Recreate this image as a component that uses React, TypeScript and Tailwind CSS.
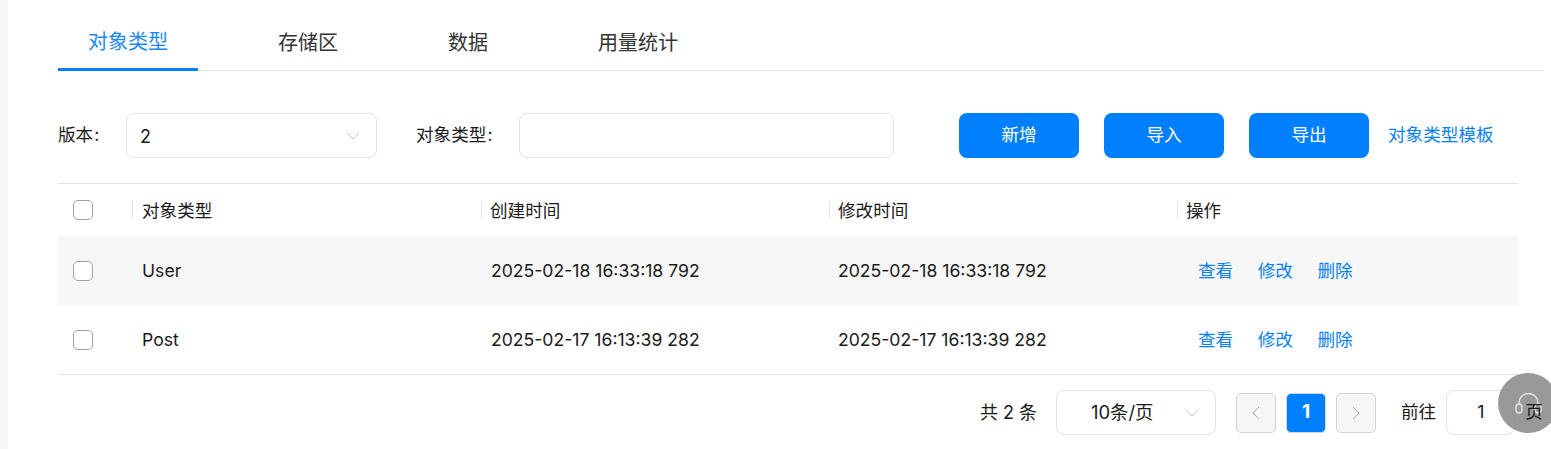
const FONT = "font-['Inter','Noto_Sans_CJK_SC',sans-serif]";

function Chevron({ dir = "down", className = "" }: { dir?: "down" | "left" | "right"; className?: string }) {
  const d = dir === "down" ? "M1 1l6 6 6-6" : dir === "left" ? "M7 1L1 7l6 6" : "M1 1l6 6-6 6";
  const w = dir === "down" ? 14 : 8;
  const h = dir === "down" ? 8 : 14;
  return (
    <svg width={w} height={h} viewBox={`0 0 ${w} ${h}`} fill="none" stroke="currentColor" strokeWidth="1" className={className}>
      <path d={d} />
    </svg>
  );
}

function Check() {
  return <span className="block h-5 w-5 rounded-[5px] border border-[#a0a0a5] bg-white" />;
}

function Row({ name, time, shaded, height }: { name: string; time: string; shaded?: boolean; height: string }) {
  return (
    <div className={`flex items-center text-[17.6px] text-[#1a1a1a] ${height} ${shaded ? "bg-[#f7f7f7]" : ""}`}>
      <div className="w-[74px] pl-[15px]"><Check /></div>
      <div className="w-[349px] pl-[10px]">{name}</div>
      <div className="w-[348px] pl-[10px]">{time}</div>
      <div className="w-[348px] pl-[9px]">{time}</div>
      <div className="flex gap-[24.5px] pl-[21px] text-[#0a7ff5]">
        <span>查看</span><span>修改</span><span>删除</span>
      </div>
    </div>
  );
}

function HeadCell({ label, className, gap }: { label: string; className: string; gap: string }) {
  return (
    <div className={`flex items-center ${className}`}>
      <span className={`h-[17px] w-px bg-[#e2e2e2] ${gap}`} />
      <span className="translate-y-px">{label}</span>
    </div>
  );
}

export default function App() {
  return (
    <div className={`${FONT} relative flex h-[449px] w-[1551px] overflow-hidden bg-white`}>
      <div className="w-2 shrink-0 bg-[#f7f7f7]" />
      <div className="flex-1 pl-[50px] pr-2">
        <div className="flex h-[71px] items-end gap-[50px] border-b border-[#e1e1e6] text-[20px] text-[#333]">
          <div className="-mb-px flex h-[71px] items-center border-b-[3px] border-[#007fff] px-[30px] pt-[16px] text-[#1a88f5]">对象类型</div>
          <div className="flex h-[71px] items-center px-[30px] pt-[16px]">存储区</div>
          <div className="flex h-[71px] items-center px-[30px] pt-[16px]">数据</div>
          <div className="flex h-[71px] items-center px-[30px] pt-[16px]">用量统计</div>
        </div>

        <div className="mr-[25px]">
          <div className="mt-[42px] flex h-[45px] items-center text-[17.6px] text-[#1a1a1a]">
            <span className="w-[68px]">版本<span className="pl-[1px]">:</span></span>
            <div className="flex h-[45px] w-[251px] items-center justify-between rounded-[8px] border border-[#e1e1e8] pl-[13px] pr-[16px]">
              <span className="translate-y-px text-[18px]">2</span>
              <Chevron className="text-[#c4c4c8]" />
            </div>
            <span className="ml-[39px] w-[103px]">对象类型<span className="pl-[1px]">:</span></span>
            <div className="h-[45px] w-[375px] rounded-[8px] border border-[#e1e1e8]" />
            <div className="ml-[65px] flex gap-[25px] text-white">
              <span className="flex h-[45px] w-[120px] items-center justify-center rounded-[8px] bg-[#007fff]">新增</span>
              <span className="flex h-[45px] w-[120px] items-center justify-center rounded-[8px] bg-[#007fff]">导入</span>
              <span className="flex h-[45px] w-[120px] items-center justify-center rounded-[8px] bg-[#007fff]">导出</span>
            </div>
            <span className="ml-[19px] text-[#0a7ff5]">对象类型模板</span>
          </div>

          <div className="mt-[25px] border-y border-[#e2e2e2]">
            <div className="flex h-[52px] items-center text-[17.6px] text-[#1a1a1a]">
              <div className="w-[74px] pl-[15px]"><Check /></div>
              <HeadCell label="对象类型" className="w-[349px]" gap="mr-[9px]" />
              <HeadCell label="创建时间" className="w-[348px]" gap="mr-[8px]" />
              <HeadCell label="修改时间" className="w-[348px]" gap="mr-[8px]" />
              <HeadCell label="操作" className="flex-1" gap="mr-[8px]" />
            </div>
            <Row name="User" time="2025-02-18 16:33:18 792" shaded height="h-[70px]" />
            <Row name="Post" time="2025-02-17 16:13:39 282" height="h-[68px]" />
          </div>
        </div>

        <div className="mt-[15px] flex h-[45px] items-center whitespace-nowrap text-[17.6px] text-[#1a1a1a]">
          <span className="ml-[922px] w-[76px] text-[18px]">共 2 条</span>
          <div className="flex h-[45px] w-[160px] items-center justify-between rounded-[8px] border border-[#e1e1e8] pl-[34px] pr-[16px]">
            <span className="text-[18.4px]">10条/页</span>
            <Chevron className="text-[#c4c4c8]" />
          </div>
          <span className="ml-[20px] flex h-[40px] w-[40px] items-center justify-center rounded-[5px] border border-[#d4d4d4] bg-[#f6f6f6] text-[#a8a8a8]"><Chevron dir="left" /></span>
          <span className="ml-[10px] flex h-[40px] w-[40px] items-center justify-center rounded-[5px] border border-[#d4d4d4] bg-[#007fff] text-[19px] font-bold text-white">1</span>
          <span className="ml-[10px] flex h-[40px] w-[40px] items-center justify-center rounded-[5px] border border-[#d4d4d4] bg-[#f6f6f6] text-[#a8a8a8]"><Chevron dir="right" /></span>
          <span className="ml-[25px]">前往</span>
          <span className="ml-[10px] flex h-[45px] w-[69px] items-center justify-center rounded-[8px] border border-[#e1e1e8]">1</span>
          <span className="relative z-10 ml-[10px]">页</span>
        </div>
      </div>

      <div className="absolute left-[1498px] top-[373px] flex h-[60px] w-[60px] items-center justify-center rounded-full bg-[#808080]/80">
        <svg width="27" height="21" viewBox="0 0 27 21" fill="none" stroke="#e4e4e4" strokeWidth="1.4">
          <path d="M4 11V10a9.5 9.5 0 0 1 19 0v1" />
          <rect x="1" y="11" width="6" height="9" rx="3" />
          <rect x="20" y="11" width="6" height="9" rx="3" />
        </svg>
      </div>
    </div>
  );
}
